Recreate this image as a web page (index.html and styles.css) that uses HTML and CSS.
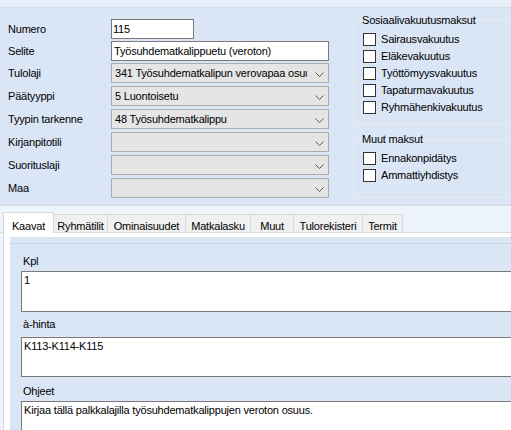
FILE: index.html
```html
<!DOCTYPE html>
<html lang="fi">
<head>
<meta charset="utf-8">
<title>Palkkalaji</title>
<link rel="stylesheet" href="styles.css">
</head>
<body>
<div class="topstrip"></div>
<div class="panel">
  <div class="form">
    <div class="row tight"><span class="lbl">Numero</span><div class="tb short">115</div></div>
    <div class="row tight"><span class="lbl">Selite</span><div class="tb long">Työsuhdematkalippuetu (veroton)</div></div>
    <div class="row"><span class="lbl">Tulolaji</span><div class="cb"><span class="val">341 Työsuhdematkalipun verovapaa osuus</span><span class="arr"><svg width="9" height="5" viewBox="0 0 9 5"><path d="M0.5 0.5 L4.5 4.5 L8.5 0.5" fill="none" stroke="#5a5a5a"/></svg></span></div></div>
    <div class="row"><span class="lbl">Päätyyppi</span><div class="cb"><span class="val">5 Luontoisetu</span><span class="arr"><svg width="9" height="5" viewBox="0 0 9 5"><path d="M0.5 0.5 L4.5 4.5 L8.5 0.5" fill="none" stroke="#5a5a5a"/></svg></span></div></div>
    <div class="row"><span class="lbl">Tyypin tarkenne</span><div class="cb"><span class="val">48 Työsuhdematkalippu</span><span class="arr"><svg width="9" height="5" viewBox="0 0 9 5"><path d="M0.5 0.5 L4.5 4.5 L8.5 0.5" fill="none" stroke="#5a5a5a"/></svg></span></div></div>
    <div class="row"><span class="lbl">Kirjanpitotili</span><div class="cb"><span class="val"></span><span class="arr"><svg width="9" height="5" viewBox="0 0 9 5"><path d="M0.5 0.5 L4.5 4.5 L8.5 0.5" fill="none" stroke="#5a5a5a"/></svg></span></div></div>
    <div class="row"><span class="lbl">Suorituslaji</span><div class="cb"><span class="val"></span><span class="arr"><svg width="9" height="5" viewBox="0 0 9 5"><path d="M0.5 0.5 L4.5 4.5 L8.5 0.5" fill="none" stroke="#5a5a5a"/></svg></span></div></div>
    <div class="row"><span class="lbl">Maa</span><div class="cb"><span class="val"></span><span class="arr"><svg width="9" height="5" viewBox="0 0 9 5"><path d="M0.5 0.5 L4.5 4.5 L8.5 0.5" fill="none" stroke="#5a5a5a"/></svg></span></div></div>
  </div>
  <div class="groups">
    <fieldset class="grp g1">
      <legend>Sosiaalivakuutusmaksut</legend>
      <div class="chk first"><span class="box13"></span><span>Sairausvakuutus</span></div>
      <div class="chk"><span class="box13"></span><span>Eläkevakuutus</span></div>
      <div class="chk"><span class="box13"></span><span>Työttömyysvakuutus</span></div>
      <div class="chk"><span class="box13"></span><span>Tapaturmavakuutus</span></div>
      <div class="chk"><span class="box13"></span><span>Ryhmähenkivakuutus</span></div>
    </fieldset>
    <fieldset class="grp g2">
      <legend>Muut maksut</legend>
      <div class="chk first"><span class="box13"></span><span>Ennakonpidätys</span></div>
      <div class="chk"><span class="box13"></span><span>Ammattiyhdistys</span></div>
    </fieldset>
  </div>
</div>
<div class="tabarea">
  <div class="tabs">
    <div class="tab sel w1">Kaavat</div>
    <div class="tab w2">Ryhmätilit</div>
    <div class="tab w3">Ominaisuudet</div>
    <div class="tab w4">Matkalasku</div>
    <div class="tab w5">Muut</div>
    <div class="tab w6">Tulorekisteri</div>
    <div class="tab w7">Termit</div>
  </div>
  <div class="page">
    <div class="content">
      <div class="sep"></div>
      <div class="flbl l1">Kpl</div>
      <div class="box b1">1</div>
      <div class="flbl l2">à-hinta</div>
      <div class="box b2">K113-K114-K115</div>
      <div class="flbl l3">Ohjeet</div>
      <div class="box b3">Kirjaa tällä palkkalajilla työsuhdematkalippujen veroton osuus.</div>
    </div>
  </div>
</div>
</body>
</html>
```
FILE: styles.css
```css
* { box-sizing: border-box; }
html, body { margin: 0; }
body {
  width: 511px;
  height: 430px;
  overflow: hidden;
  font: 11px/13px "Liberation Sans", Arial, sans-serif;
  letter-spacing: -0.2px;
  color: #000;
  background: #fff;
}
.topstrip {
  height: 8px;
  background: #e6eefa;
  border-bottom: 1px solid #d3dbe5;
}
.panel {
  height: 198px;
  background: #dae5f5;
  border-bottom: 2px solid #d5dce5;
  display: flex;
  padding: 6px 0 0 8px;
}
.form {
  margin-top: 5px;
  width: 321px;
  flex: none;
  display: flex;
  flex-direction: column;
  gap: 3px;
}
.row {
  display: flex;
  align-items: center;
  height: 20px;
}
.row.tight { margin-bottom: -1px; }
.lbl { width: 103px; flex: none; white-space: nowrap; }
.tb {
  height: 20px;
  border: 1px solid #7a7a7a;
  background: #fff;
  padding: 0 2px;
  display: flex;
  align-items: center;
  white-space: nowrap;
  overflow: hidden;
}
.tb.short { width: 83px; padding-left: 1px; }
.tb.long { width: 218px; }
.cb {
  width: 218px;
  height: 20px;
  border: 1px solid #acacac;
  background: #e5e5e5;
  display: flex;
  align-items: center;
}
.cb .val {
  flex: 1;
  min-width: 0;
  padding-left: 3px;
  margin-right: 4px;
  white-space: nowrap;
  overflow: hidden;
}
.cb .arr {
  width: 16px;
  margin-right: 1px;
  display: flex;
  justify-content: center;
  padding-top: 2px;
}
.cb .arr svg { display: block; }
.groups {
  margin-left: 24px;
  width: 159px;
  flex: none;
  display: flex;
  flex-direction: column;
}
.grp {
  margin: 0;
  padding: 0 0 0 7px;
  border: 1px solid #e8ecf1;
  width: 159px;
  min-width: 0;
}
.grp legend {
  padding: 0 1px;
  margin: 0;
  line-height: 13px;
}
.g1 { height: 111px; }
.g2 { height: 65px; margin-top: 8px; }
.chk {
  display: flex;
  align-items: center;
  height: 17px;
  gap: 5px;
  padding-left: 2px;
  white-space: nowrap;
}
.chk.first { margin-top: 4px; }
.box13 {
  width: 13px;
  height: 13px;
  flex: none;
  border: 1px solid #333;
  background: #fff;
}
.tabarea {
  background: #edf4fc;
  padding-top: 6px;
}
.tabs {
  display: flex;
  align-items: flex-end;
  height: 21px;
  padding-left: 3px;
  border-bottom: 1px solid #d9d9d9;
}
.tab {
  height: 18px;
  border: 1px solid #d9d9d9;
  border-bottom: none;
  background: #f0f0f0;
  text-align: center;
  padding-top: 5px;
  margin-left: -1px;
  white-space: nowrap;
  flex: none;
}
.tab.sel {
  height: 21px;
  margin-left: 0;
  margin-bottom: -1px;
  padding-top: 7px;
  background: #fff;
  position: relative;
  z-index: 1;
}
.w1 { width: 51px; }
.w2 { width: 55px; }
.w3 { width: 79px; }
.w4 { width: 66px; }
.w5 { width: 44px; }
.w6 { width: 70px; }
.w7 { width: 41px; }
.page {
  margin-left: 3px;
  border-left: 1px solid #d9d9d9;
  background: #fff;
  padding: 4px 0 0 6px;
}
.content {
  background: #dae5f5;
  padding: 6px 0 0 11px;
  height: 193px;
  overflow: hidden;
}
.sep {
  height: 1px;
  background: #ccd6e3;
  margin-left: -11px;
}
.flbl { padding-left: 2px; }
.l1 { margin-top: 11px; }
.l2 { margin-top: 6px; }
.l3 { margin-top: 8px; }
.box {
  width: 491px;
  border: 1px solid #7a7a7a;
  background: #fff;
  padding: 2px;
  white-space: nowrap;
  overflow: hidden;
}
.b1 { height: 41px; margin-top: 3px; }
.b2 { height: 40px; margin-top: 6px; }
.b3 { height: 30px; margin-top: 3px; }
```
